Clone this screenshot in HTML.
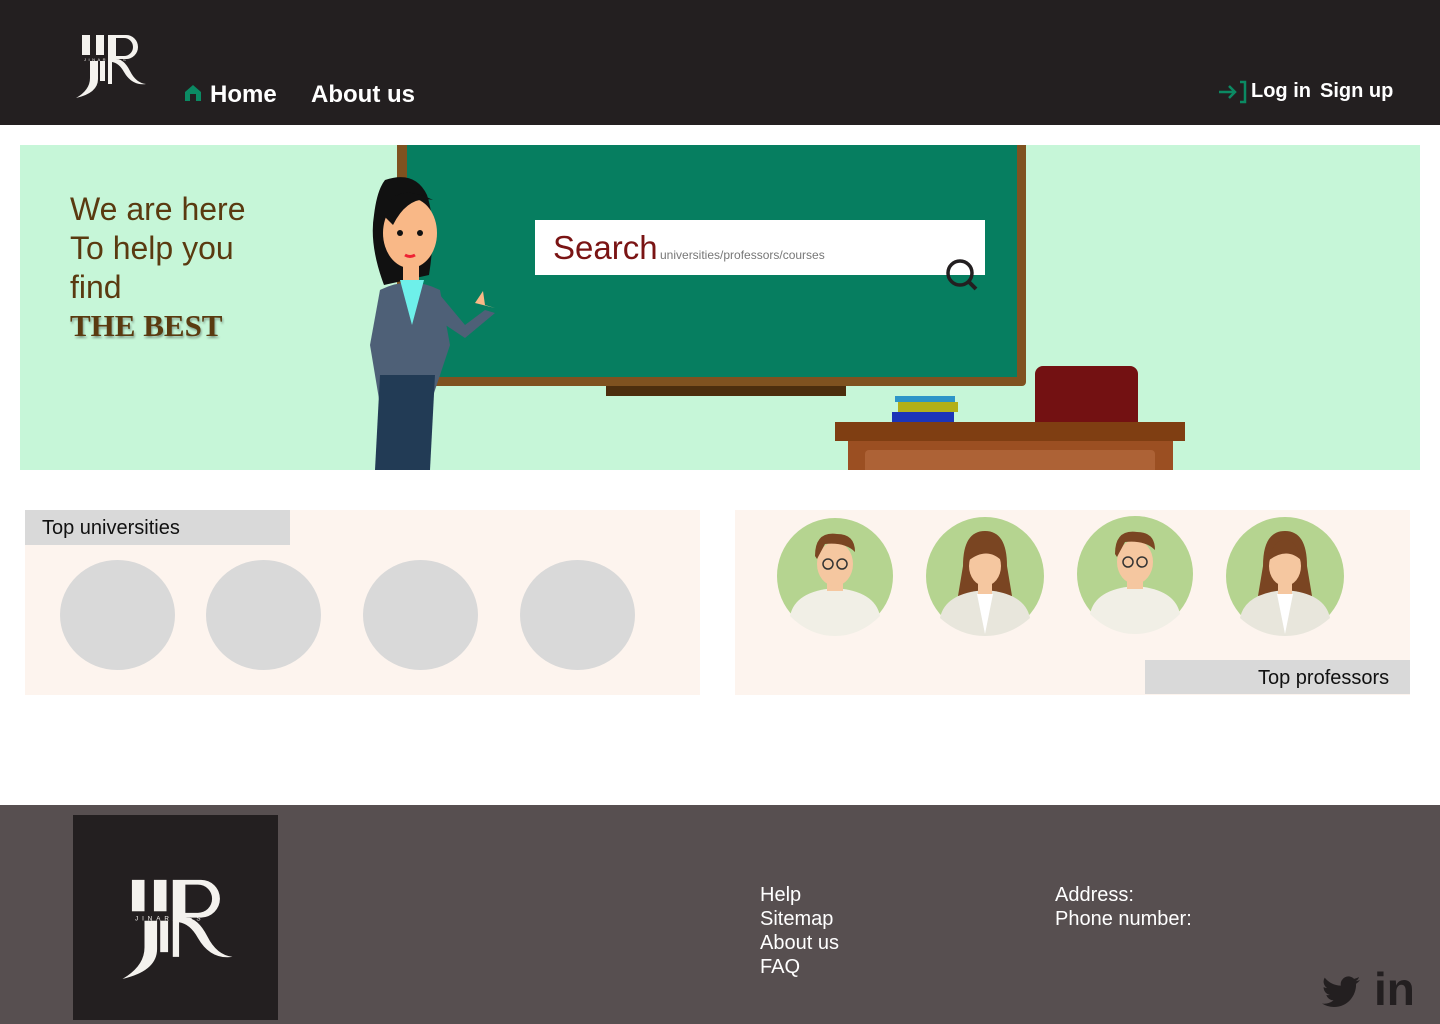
<!DOCTYPE html>
<html><head><meta charset="utf-8"><style>
*{margin:0;padding:0;box-sizing:border-box}
body{width:1440px;height:1024px;position:relative;background:#fff;font-family:"Liberation Sans",sans-serif;overflow:hidden}
.a{position:absolute}
.nav{color:#fff;font-weight:bold;font-size:24px}
</style></head><body>
<div class="a" style="left:0;top:0;width:1440px;height:125px;background:#231f20"></div>
<div class="a" style="left:76px;top:30px;width:70px;height:70px">
<svg width="70" height="70" viewBox="0 0 70 70"><g fill="#f4f2ee">
<rect x="6" y="5" width="8" height="20"/><rect x="20" y="5" width="8" height="20"/>
<path d="M32 5 h18 a12 12 0 0 1 0 24 h-10 q8 0 14 12 q6 12 16 13 q-14 2 -22 -12 q-5 -9 -12 -10 v22 h-4 z M40 8 v18 h8 a9 9 0 0 0 0 -18z"/>
<path d="M14 31 h8 v18 q0 14 -22 19 q14 -8 14 -20z"/><rect x="24" y="31" width="5" height="20"/></g>
<text x="8" y="31" font-size="4" fill="#f4f2ee" letter-spacing="2.5" font-family="Liberation Sans">JINARATES</text></svg></div>
<svg class="a" style="left:184px;top:84px" width="18" height="18" viewBox="0 0 18 18"><path d="M9 1 L17 8 V17 H12 V10 H6 V17 H1 V8Z" fill="#0b8a63"/></svg>
<div class="a nav" style="left:210px;top:81px">Home</div>
<div class="a nav" style="left:311px;top:81px">About us</div>
<svg class="a" style="left:1218px;top:80px" width="30" height="24" viewBox="0 0 30 24"><g stroke="#0b8a63" stroke-width="2.5" fill="none"><path d="M1 12 H17 M11 6 L17 12 L11 18"/><path d="M22 2 H27 V22 H22"/></g></svg>
<div class="a nav" style="left:1251px;top:80px;font-size:20px">Log in</div>
<div class="a nav" style="left:1320px;top:80px;font-size:20px">Sign up</div>

<div class="a" style="left:20px;top:145px;width:1400px;height:325px;background:#c6f6d8;overflow:hidden">
 <div class="a" style="left:377px;top:0;width:629px;height:241px;background:#7f5220;border-radius:0 0 4px 4px"></div>
 <div class="a" style="left:387px;top:0;width:610px;height:232px;background:#067e60"></div>
 <div class="a" style="left:586px;top:241px;width:240px;height:10px;background:#4c2e0e"></div>
 <div class="a" style="left:1015px;top:221px;width:103px;height:60px;background:#731112;border-radius:8px 8px 0 0"></div>
 <div class="a" style="left:875px;top:251px;width:60px;height:6px;background:#2d95c8"></div>
 <div class="a" style="left:878px;top:257px;width:60px;height:10px;background:#b3b018"></div>
 <div class="a" style="left:872px;top:267px;width:62px;height:11px;background:#1c34b8"></div>
 <div class="a" style="left:815px;top:277px;width:350px;height:19px;background:#7f3e12"></div>
 <div class="a" style="left:828px;top:296px;width:325px;height:30px;background:#9b4f22"></div>
 <div class="a" style="left:845px;top:305px;width:290px;height:25px;background:#ad6236;border-radius:4px"></div>
 <svg class="a" style="left:335px;top:30px" width="140" height="295" viewBox="0 0 140 295">
  <path d="M30 5 q30 -10 42 15 q10 30 2 80 l-45 10 q-15 -40 -10 -70 q3 -25 11 -35z" fill="#111"/>
  <ellipse cx="55" cy="58" rx="27" ry="35" fill="#f9b887"/>
  <path d="M28 40 q10 -35 50 -15 q-25 -5 -40 25z" fill="#111"/>
  <circle cx="45" cy="58" r="3" fill="#111"/><circle cx="65" cy="58" r="3" fill="#111"/>
  <path d="M50 80 q5 3 10 0" stroke="#e23" stroke-width="3" fill="none"/>
  <rect x="48" y="88" width="16" height="20" fill="#f9b887"/>
  <path d="M25 115 q30 -15 60 0 l10 55 l-20 60 h-50 l-10 -60z" fill="#4e6077"/>
  <path d="M45 105 l12 45 l12 -45z" fill="#6ef0ea"/>
  <path d="M30 120 q-20 60 0 80 l20 -20z" fill="#4e6077"/>
  <path d="M85 120 l25 30 l20 -15 l10 3 l-12 10 l-18 15 l-30 -20z" fill="#4e6077"/>
  <path d="M120 128 l8 -12 l2 14 l10 3 z" fill="#f9b887"/>
  <path d="M25 200 h55 l-5 95 h-55z" fill="#223b55"/>
 </svg>
 <div class="a" style="left:50px;top:45px;font-size:32px;line-height:39px;color:#5a3a10">We are here<br>To help you<br>find</div>
 <div class="a" style="left:50px;top:163px;font-size:31px;font-weight:bold;font-family:'Liberation Serif',serif;color:#5a3a10;text-shadow:1px 2px 2px rgba(0,0,0,.35)">THE BEST</div>
</div>
<div class="a" style="left:535px;top:220px;width:450px;height:55px;background:#fff"></div>
<div class="a" style="left:553px;top:229px;font-size:33px;color:#7a1414">Search</div>
<div class="a" style="left:660px;top:248px;font-size:12px;color:#777">universities/professors/courses</div>
<svg class="a" style="left:944px;top:257px" width="36" height="36" viewBox="0 0 36 36"><circle cx="16" cy="16" r="12" stroke="#231f20" stroke-width="3.5" fill="none"/><path d="M25 25 L32 32" stroke="#231f20" stroke-width="4"/></svg>

<div class="a" style="left:25px;top:510px;width:675px;height:185px;background:#fdf4ee"></div>
<div class="a" style="left:25px;top:510px;width:265px;height:35px;background:#d9d9d9"></div>
<div class="a" style="left:42px;top:517px;font-size:20px;color:#111">Top universities</div>
<div class="a" style="left:60px;top:560px;width:115px;height:110px;border-radius:50%;background:#d9d9d9"></div>
<div class="a" style="left:206px;top:560px;width:115px;height:110px;border-radius:50%;background:#d9d9d9"></div>
<div class="a" style="left:363px;top:560px;width:115px;height:110px;border-radius:50%;background:#d9d9d9"></div>
<div class="a" style="left:520px;top:560px;width:115px;height:110px;border-radius:50%;background:#d9d9d9"></div>

<div class="a" style="left:735px;top:510px;width:675px;height:185px;background:#fdf4ee"></div>
<div class="a" style="left:1145px;top:660px;width:265px;height:34px;background:#d9d9d9"></div>
<div class="a" style="left:1258px;top:667px;font-size:20px;color:#111">Top professors</div>
<svg class="a" style="left:770px;top:510px" width="590" height="130" viewBox="0 0 590 130">
 <defs>
 <g id="m"><circle cx="0" cy="0" r="58" fill="#b5d490"/><path d="M-45 40 q5 -25 45 -28 q40 3 45 28 q-20 20 -45 20 q-25 0 -45 -20z" fill="#f1efe6"/><rect x="-8" y="0" width="16" height="15" fill="#f5c7a0"/><ellipse cx="0" cy="-12" rx="18" ry="22" fill="#f5c7a0"/><path d="M-20 -20 q0 -25 22 -22 q18 0 18 18 q-10 -10 -30 -8 l-8 15z" fill="#7a4522"/><circle cx="-7" cy="-12" r="5" fill="none" stroke="#333" stroke-width="1.5"/><circle cx="7" cy="-12" r="5" fill="none" stroke="#333" stroke-width="1.5"/></g>
 <g id="f"><circle cx="0" cy="0" r="59" fill="#b5d490"/><path d="M-22 -10 q0 -35 22 -35 q22 0 22 35 l5 30 h-54z" fill="#7a4522"/><path d="M-45 42 q5 -25 45 -28 q40 3 45 28 q-20 18 -45 18 q-25 0 -45 -18z" fill="#e8e6dc"/><path d="M-8 18 l8 40 l8 -40z" fill="#fff"/><rect x="-7" y="0" width="14" height="18" fill="#f5c7a0"/><ellipse cx="0" cy="-10" rx="16" ry="20" fill="#f5c7a0"/><path d="M-17 -15 q5 -20 17 -22 q12 2 17 22 q-15 -15 -34 0z" fill="#7a4522"/></g>
 </defs>
 <use href="#m" x="65" y="66"/><use href="#f" x="215" y="66"/><use href="#m" x="365" y="64"/><use href="#f" x="515" y="66"/>
</svg>

<div class="a" style="left:0;top:805px;width:1440px;height:219px;background:#574f50"></div>
<div class="a" style="left:73px;top:815px;width:205px;height:205px;background:#231f20"></div>
<div class="a" style="left:120px;top:872px;width:115px;height:110px">
<svg width="115" height="110" viewBox="0 0 70 70"><g fill="#f4f2ee">
<rect x="6" y="5" width="8" height="20"/><rect x="20" y="5" width="8" height="20"/>
<path d="M32 5 h18 a12 12 0 0 1 0 24 h-10 q8 0 14 12 q6 12 16 13 q-14 2 -22 -12 q-5 -9 -12 -10 v22 h-4 z M40 8 v18 h8 a9 9 0 0 0 0 -18z"/>
<path d="M14 31 h8 v18 q0 14 -22 19 q14 -8 14 -20z"/><rect x="24" y="31" width="5" height="20"/></g>
<text x="8" y="31" font-size="4" fill="#f4f2ee" letter-spacing="2.5" font-family="Liberation Sans">JINARATES</text></svg></div>
<div class="a" style="left:760px;top:883px;font-size:20px;line-height:24px;color:#fff">Help<br>Sitemap<br>About us<br>FAQ</div>
<div class="a" style="left:1055px;top:883px;font-size:20px;line-height:24px;color:#fff">Address:<br>Phone number:</div>
<svg class="a" style="left:1322px;top:976px" width="38" height="32" viewBox="0 0 24 20"><path d="M24 2.4a10 10 0 0 1-2.8.8 5 5 0 0 0 2.2-2.7 10 10 0 0 1-3.1 1.2A4.9 4.9 0 0 0 11.9 6 14 14 0 0 1 1.7.9a4.9 4.9 0 0 0 1.5 6.6A4.9 4.9 0 0 1 1 6.9 4.9 4.9 0 0 0 4.9 11.8a4.9 4.9 0 0 1-2.2.1 4.9 4.9 0 0 0 4.6 3.4A9.9 9.9 0 0 1 0 17.3 14 14 0 0 0 7.5 19.5c9 0 14-7.5 14-14v-.6A10 10 0 0 0 24 2.4z" fill="#231f20"/></svg>
<div class="a" style="left:1374px;top:962px;font-size:46px;font-weight:bold;color:#231f20">in</div>
</body></html>
